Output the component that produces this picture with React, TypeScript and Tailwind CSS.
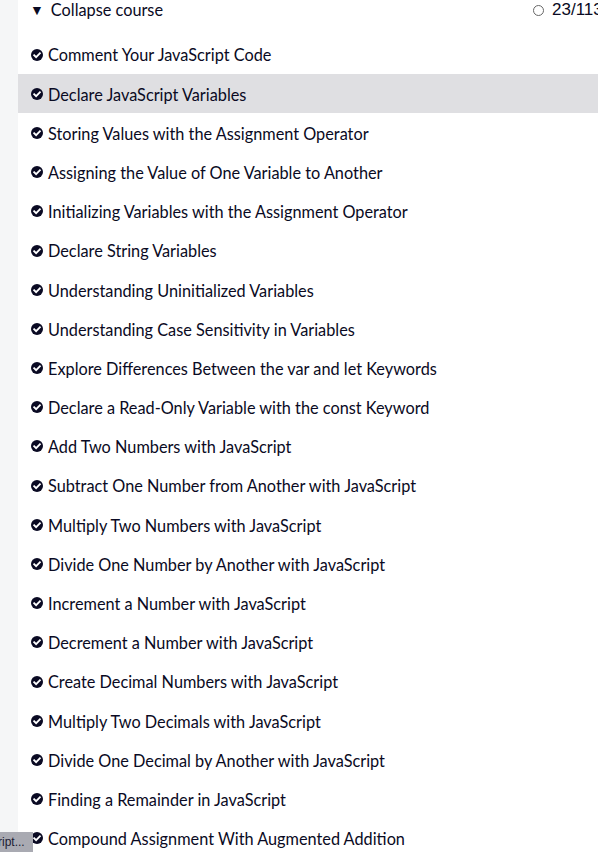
import React from 'react';

const lessons = [
  'Comment Your JavaScript Code',
  'Declare JavaScript Variables',
  'Storing Values with the Assignment Operator',
  'Assigning the Value of One Variable to Another',
  'Initializing Variables with the Assignment Operator',
  'Declare String Variables',
  'Understanding Uninitialized Variables',
  'Understanding Case Sensitivity in Variables',
  'Explore Differences Between the var and let Keywords',
  'Declare a Read-Only Variable with the const Keyword',
  'Add Two Numbers with JavaScript',
  'Subtract One Number from Another with JavaScript',
  'Multiply Two Numbers with JavaScript',
  'Divide One Number by Another with JavaScript',
  'Increment a Number with JavaScript',
  'Decrement a Number with JavaScript',
  'Create Decimal Numbers with JavaScript',
  'Multiply Two Decimals with JavaScript',
  'Divide One Decimal by Another with JavaScript',
  'Finding a Remainder in JavaScript',
  'Compound Assignment With Augmented Addition',
];

function CheckCircle() {
  return (
    <svg viewBox="0 0 16 16" className="w-[12px] h-[12px] shrink-0">
      <circle cx="8" cy="8" r="8" fill="#0a0a23" />
      <path d="M4.2 8.3 L6.8 10.9 L11.9 5.6" fill="none" stroke="#fff" strokeWidth="2.4" strokeLinecap="square" />
    </svg>
  );
}

export default function App() {
  return (
    <div className="relative flex w-[598px] h-[852px] overflow-hidden bg-white text-[#0a0a23] font-['Lato','Liberation_Sans',sans-serif]">
      <div className="w-[18px] shrink-0 bg-[#f5f6f7]" />
      <div className="flex-1 min-w-0">
        {/* Header */}
        <div className="flex h-[35px] items-start">
          <div className="w-[515px] shrink-0 flex items-center h-[20px] pl-[12px] gap-[7px]">
            <span className="text-[14px] leading-none">▼</span>
            <span className="text-[16.3px]">Collapse course</span>
          </div>
          <div className="shrink-0 flex items-center h-[20px] gap-[8px] whitespace-nowrap">
            <span className="w-[11px] h-[11px] rounded-full border border-[#666]" />
            <span className="text-[17px] font-['Liberation_Sans',sans-serif]">23/113</span>
          </div>
        </div>

        {/* Lessons */}
        <div className="flex flex-col">
          {lessons.map((lesson, i) => (
            <div
              key={lesson}
              className={`flex items-center h-[39.2px] pl-[13px] gap-[5px] text-[16.3px] whitespace-nowrap ${i === 1 ? 'bg-[#dfdfe2]' : ''}`}
            >
              <CheckCircle />
              <span className="pt-[2px]">{lesson}</span>
            </div>
          ))}
        </div>
      </div>

      {/* status tooltip */}
      <div className="absolute left-0 bottom-0 h-[20px] w-[33px] bg-[#a9aab2] text-[12px] leading-[20px] text-[#1b1b32] overflow-hidden whitespace-nowrap">
        <span className="block -ml-[2px] font-['Liberation_Sans',sans-serif]">ript...</span>
      </div>
    </div>
  );
}
